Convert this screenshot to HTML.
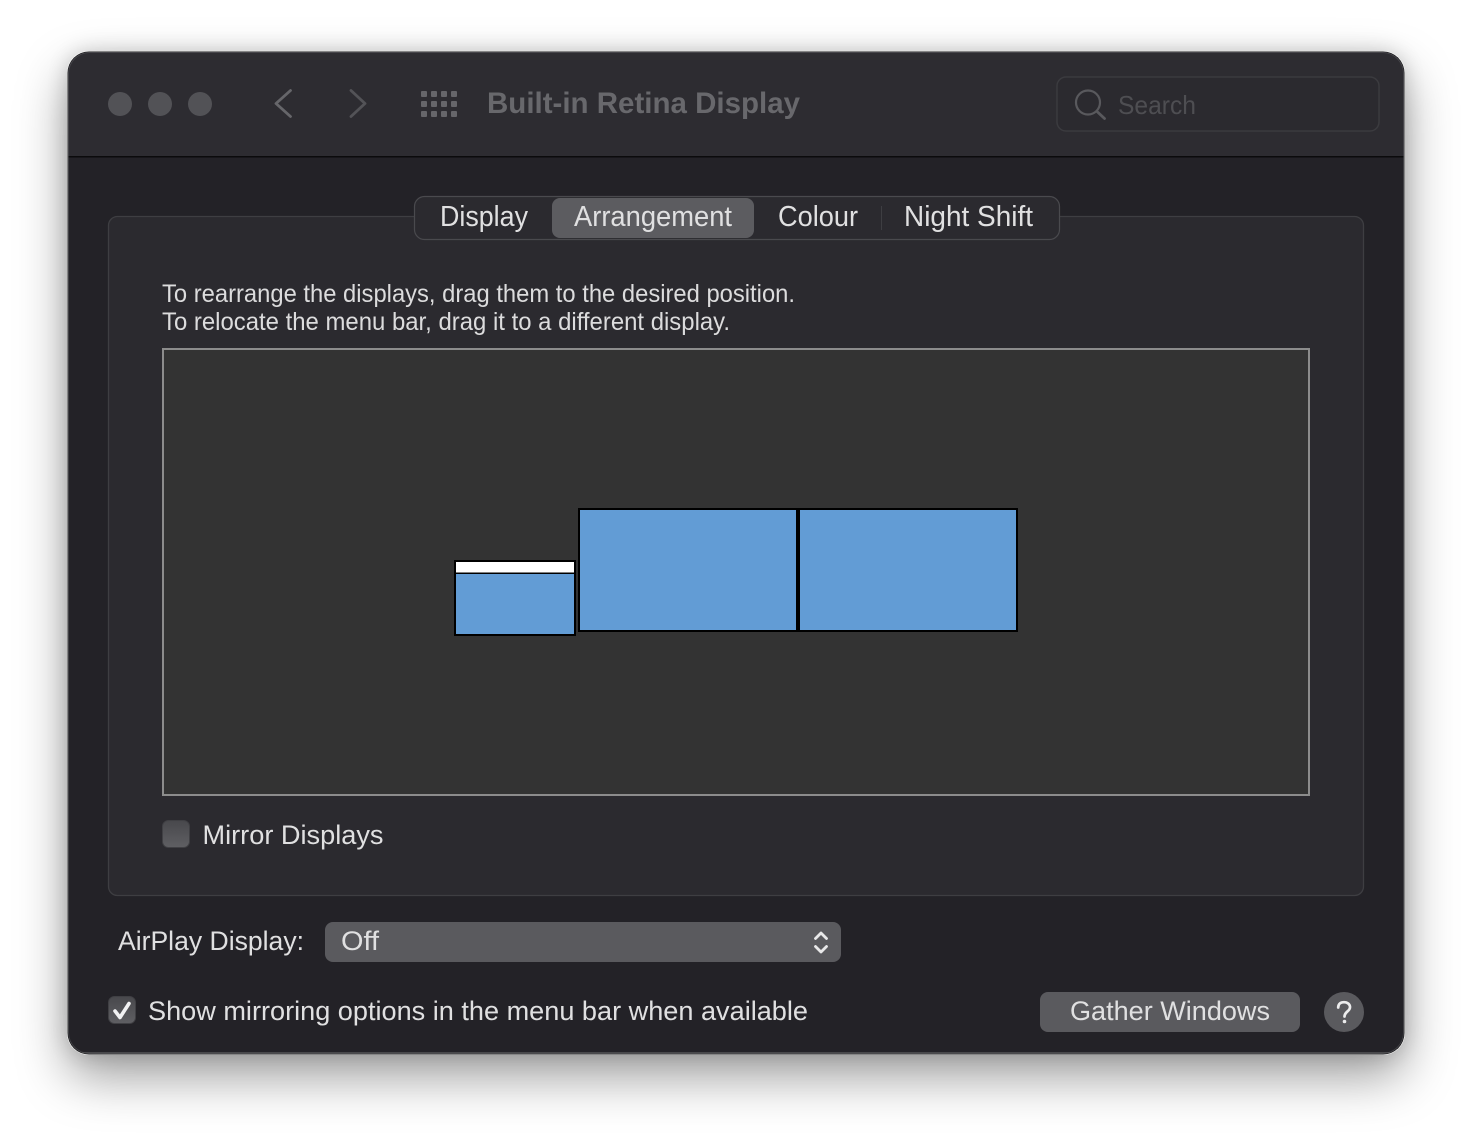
<!DOCTYPE html>
<html lang="en">
<head>
<meta charset="utf-8">
<title>Built-in Retina Display</title>
<style>
html,body{margin:0;padding:0;width:1472px;height:1138px;overflow:hidden;background:#fff}
.win{position:absolute;left:67px;top:51px;width:1338px;height:1004px;border-radius:22px;box-shadow:0 22px 50px rgba(0,0,0,.38),0 0 20px rgba(0,0,0,.16)}
svg{position:absolute;left:0;top:0}
text{font-family:"Liberation Sans",sans-serif;fill:#e0e0e1;font-size:27px}
.d{font-size:25px;fill:#dcdcdd}
</style>
</head>
<body>
<div class="win"></div>
<svg width="1472" height="1138" viewBox="0 0 1472 1138" xmlns="http://www.w3.org/2000/svg">
<defs>
<clipPath id="w"><rect x="68" y="52" width="1336" height="1002" rx="21"/></clipPath>
<linearGradient id="cb" x1="0" y1="0" x2="0" y2="1"><stop offset="0" stop-color="#48484c"/><stop offset="1" stop-color="#5f5f63"/></linearGradient>
</defs>
<rect x="67.500" y="51.500" width="1337" height="1003" rx="21.500" fill="#0c0c0d"/>
<g clip-path="url(#w)">
<rect x="68" y="52" width="1336" height="1002" fill="#232227"/>
<rect x="68" y="52" width="1336" height="104" fill="#2d2c31"/>
<rect x="68" y="156" width="1336" height="1.500" fill="#0b0b0c"/>
<rect x="68" y="1052" width="1336" height="1.500" fill="#48484b"/>
</g>
<rect x="68.500" y="52.500" width="1335" height="1001" rx="21" fill="none" stroke="#5b5b5e" stroke-width="1" opacity=".55"/>
<circle cx="120" cy="104" r="12" fill="#525256"/>
<circle cx="160" cy="104" r="12" fill="#525256"/>
<circle cx="200" cy="104" r="12" fill="#525256"/>
<path d="M290.500 90.500L276 103.500L290.500 116.500" fill="none" stroke="#66666a" stroke-width="2.800" stroke-linecap="round" stroke-linejoin="round"/>
<path d="M351 90.500L365 103.500L351 116.500" fill="none" stroke="#535357" stroke-width="2.800" stroke-linecap="round" stroke-linejoin="round"/>
<g fill="#66666a">
<rect x="421" y="91" width="6" height="6" rx="1"/><rect x="431" y="91" width="6" height="6" rx="1"/><rect x="441" y="91" width="6" height="6" rx="1"/><rect x="451" y="91" width="6" height="6" rx="1"/>
<rect x="421" y="101" width="6" height="6" rx="1"/><rect x="431" y="101" width="6" height="6" rx="1"/><rect x="441" y="101" width="6" height="6" rx="1"/><rect x="451" y="101" width="6" height="6" rx="1"/>
<rect x="421" y="111" width="6" height="6" rx="1"/><rect x="431" y="111" width="6" height="6" rx="1"/><rect x="441" y="111" width="6" height="6" rx="1"/><rect x="451" y="111" width="6" height="6" rx="1"/>
</g>
<text x="487" y="113" textLength="313" lengthAdjust="spacingAndGlyphs" style="font-size:30px;font-weight:700;fill:#68686c">Built-in Retina Display</text>
<rect x="1057" y="77" width="322" height="54" rx="9" fill="#2b2a2f" stroke="#3b3b3f" stroke-width="1.500"/>
<circle cx="1088" cy="102.500" r="12" fill="none" stroke="#59595d" stroke-width="2.200"/>
<path d="M1097 111.500L1104.500 118.500" fill="none" stroke="#59595d" stroke-width="2.800" stroke-linecap="round"/>
<text x="1118" y="114" textLength="78" lengthAdjust="spacingAndGlyphs" style="font-size:26px;fill:#4e4e52">Search</text>

<rect x="108.500" y="216.500" width="1255" height="679" rx="9" fill="#2b2a2f" stroke="#3e3e42" stroke-width="1.300"/>
<rect x="414.500" y="196.500" width="645" height="43" rx="10" fill="#2b2a2f" stroke="#4a4a4e" stroke-width="1.200"/>
<rect x="552" y="198" width="202" height="40" rx="8" fill="#5c5c60"/>
<rect x="881" y="206" width="1" height="24" fill="#3e3e42"/>
<text x="440" y="226" textLength="88" lengthAdjust="spacingAndGlyphs" style="font-size:29px">Display</text>
<text x="574" y="226" textLength="158" lengthAdjust="spacingAndGlyphs" style="font-size:29px">Arrangement</text>
<text x="778" y="226" textLength="80" lengthAdjust="spacingAndGlyphs" style="font-size:29px">Colour</text>
<text x="904" y="226" textLength="129" lengthAdjust="spacingAndGlyphs" style="font-size:29px">Night Shift</text>

<text class="d" x="162" y="302" textLength="633" lengthAdjust="spacingAndGlyphs">To rearrange the displays, drag them to the desired position.</text>
<text class="d" x="162" y="330" textLength="568" lengthAdjust="spacingAndGlyphs">To relocate the menu bar, drag it to a different display.</text>

<rect x="163" y="349" width="1146" height="446" fill="#333333" stroke="#8c8c8c" stroke-width="2"/>
<rect x="455" y="561" width="120" height="74" fill="#629cd5" stroke="#000" stroke-width="2"/>
<rect x="456" y="562" width="118" height="11" fill="#fff"/>
<rect x="455" y="572.500" width="120" height="1.500" fill="#000"/>
<rect x="579" y="509" width="218" height="122" fill="#629cd5" stroke="#000" stroke-width="2"/>
<rect x="799" y="509" width="218" height="122" fill="#629cd5" stroke="#000" stroke-width="2"/>

<rect x="162.500" y="820.500" width="27" height="27" rx="6" fill="url(#cb)" stroke="#404044" stroke-width="1"/>
<text x="202.500" y="844" textLength="181" lengthAdjust="spacingAndGlyphs">Mirror Displays</text>

<text x="118" y="950" textLength="186" lengthAdjust="spacingAndGlyphs">AirPlay Display:</text>
<rect x="325" y="922" width="516" height="40" rx="8" fill="#5a5a5e"/>
<text x="341" y="950" textLength="38" lengthAdjust="spacingAndGlyphs">Off</text>
<path d="M815.500 938.500L821 933L826.500 938.500M815.500 946.500L821 952L826.500 946.500" fill="none" stroke="#e8e8e9" stroke-width="2.800" stroke-linecap="round" stroke-linejoin="round"/>

<rect x="108.500" y="996.500" width="27" height="27" rx="6" fill="url(#cb)" stroke="#404044" stroke-width="1"/>
<path d="M115 1011L120 1017.500L129 1003.500" fill="none" stroke="#f2f2f3" stroke-width="3.600" stroke-linecap="round" stroke-linejoin="round"/>
<text x="148" y="1020" textLength="660" lengthAdjust="spacingAndGlyphs">Show mirroring options in the menu bar when available</text>

<rect x="1040" y="992" width="260" height="40" rx="8" fill="#5a5a5e"/>
<text x="1070" y="1020" textLength="200" lengthAdjust="spacingAndGlyphs">Gather Windows</text>
<circle cx="1344" cy="1012" r="20" fill="#5a5a5e"/>
<path d="M1338.200 1007.500C1338.200 1004 1340.600 1002.200 1344 1002.200C1347.400 1002.200 1350 1004.200 1350 1007.200C1350 1011.200 1344.500 1011.800 1344.500 1016.500" fill="none" stroke="#ececed" stroke-width="2.700" stroke-linecap="round"/>
<circle cx="1344.500" cy="1021.500" r="1.800" fill="#ececed"/>
</svg>
</body>
</html>
